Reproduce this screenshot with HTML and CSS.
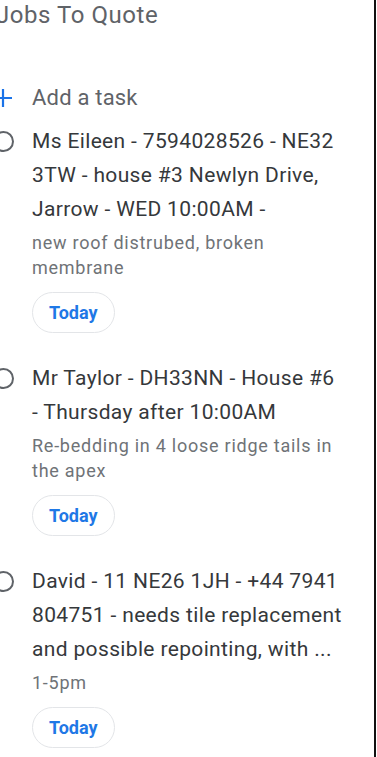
FILE: index.html
```html
<!DOCTYPE html>
<html lang="en">
<head>
<meta charset="utf-8">
<title>Jobs To Quote</title>
<link rel="stylesheet" href="styles.css">
</head>
<body>
<div class="screen">
  <h1 class="list-title">Jobs To Quote</h1>
  <div class="add-row">
    <span class="icon-col">
      <svg class="plus" width="20" height="20" viewBox="0 0 20 20"><path d="M10 1v18M1 10h18" stroke="#1a73e8" stroke-width="2.2" fill="none"/></svg>
    </span>
    <span class="add-text">Add a task</span>
  </div>
  <ul class="tasks">
    <li class="task">
      <span class="icon-col"><span class="ring"></span></span>
      <div class="task-body">
        <p class="task-title">Ms Eileen - 7594028526 - NE32 3TW - house #3 Newlyn Drive, Jarrow - WED 10:00AM -</p>
        <p class="task-notes">new roof distrubed, broken membrane</p>
        <span class="chip">Today</span>
      </div>
    </li>
    <li class="task">
      <span class="icon-col"><span class="ring"></span></span>
      <div class="task-body">
        <p class="task-title">Mr Taylor - DH33NN - House #6 - Thursday after 10:00AM</p>
        <p class="task-notes">Re-bedding in 4 loose ridge tails in the apex</p>
        <span class="chip">Today</span>
      </div>
    </li>
    <li class="task">
      <span class="icon-col"><span class="ring"></span></span>
      <div class="task-body">
        <p class="task-title">David - 11 NE26 1JH - +44 7941 804751 - needs tile replacement and possible repointing, with ...</p>
        <p class="task-notes">1-5pm</p>
        <span class="chip">Today</span>
      </div>
    </li>
  </ul>
</div>
</body>
</html>
```
FILE: styles.css
```css
html, body {
  margin: 0;
  padding: 0;
  background: #ffffff;
}
body {
  width: 377px;
  height: 757px;
  overflow: hidden;
  font-family: Roboto, "Liberation Sans", sans-serif;
}
.screen {
  width: 374px;
  height: 757px;
  border-right: 2px solid #111111;
  overflow: hidden;
}
.list-title {
  margin: 0 0 0 -4px;
  font-size: 24px;
  line-height: 30px;
  font-weight: 400;
  color: #5f6368;
  letter-spacing: 0.55px;
}
.icon-col {
  width: 32px;
  margin-left: -13px;
  flex: none;
  display: flex;
  justify-content: center;
}
.add-row {
  display: flex;
  align-items: center;
  gap: 13px;
  margin-top: 51px;
  height: 34px;
}
.plus {
  display: block;
}
.add-text {
  font-size: 22px;
  line-height: 34px;
  color: #5f6368;
  letter-spacing: 0.2px;
}
.tasks {
  list-style: none;
  margin: 9px 0 0;
  padding: 0;
  display: flex;
  flex-direction: column;
  gap: 28px;
}
.task {
  display: flex;
  gap: 13px;
}
.task .icon-col {
  height: 34px;
  align-items: center;
}
.ring {
  width: 17px;
  height: 17px;
  border: 2px solid #5f6368;
  border-radius: 50%;
}
.task-body {
  width: 312px;
  display: flex;
  flex-direction: column;
  align-items: flex-start;
}
.task-title {
  margin: 0;
  font-size: 21px;
  line-height: 34px;
  letter-spacing: 0.35px;
  color: #35383b;
}
.task-notes {
  margin: 3.5px 0 0;
  font-size: 18px;
  line-height: 25px;
  letter-spacing: 0.75px;
  color: #6f7377;
}
.chip {
  margin-top: 12.5px;
  height: 41px;
  box-sizing: border-box;
  padding: 0 16px;
  border: 1px solid #e3e5e8;
  border-radius: 21px;
  display: flex;
  align-items: center;
  font-size: 18px;
  font-weight: 700;
  color: #1f78e6;
}
```
